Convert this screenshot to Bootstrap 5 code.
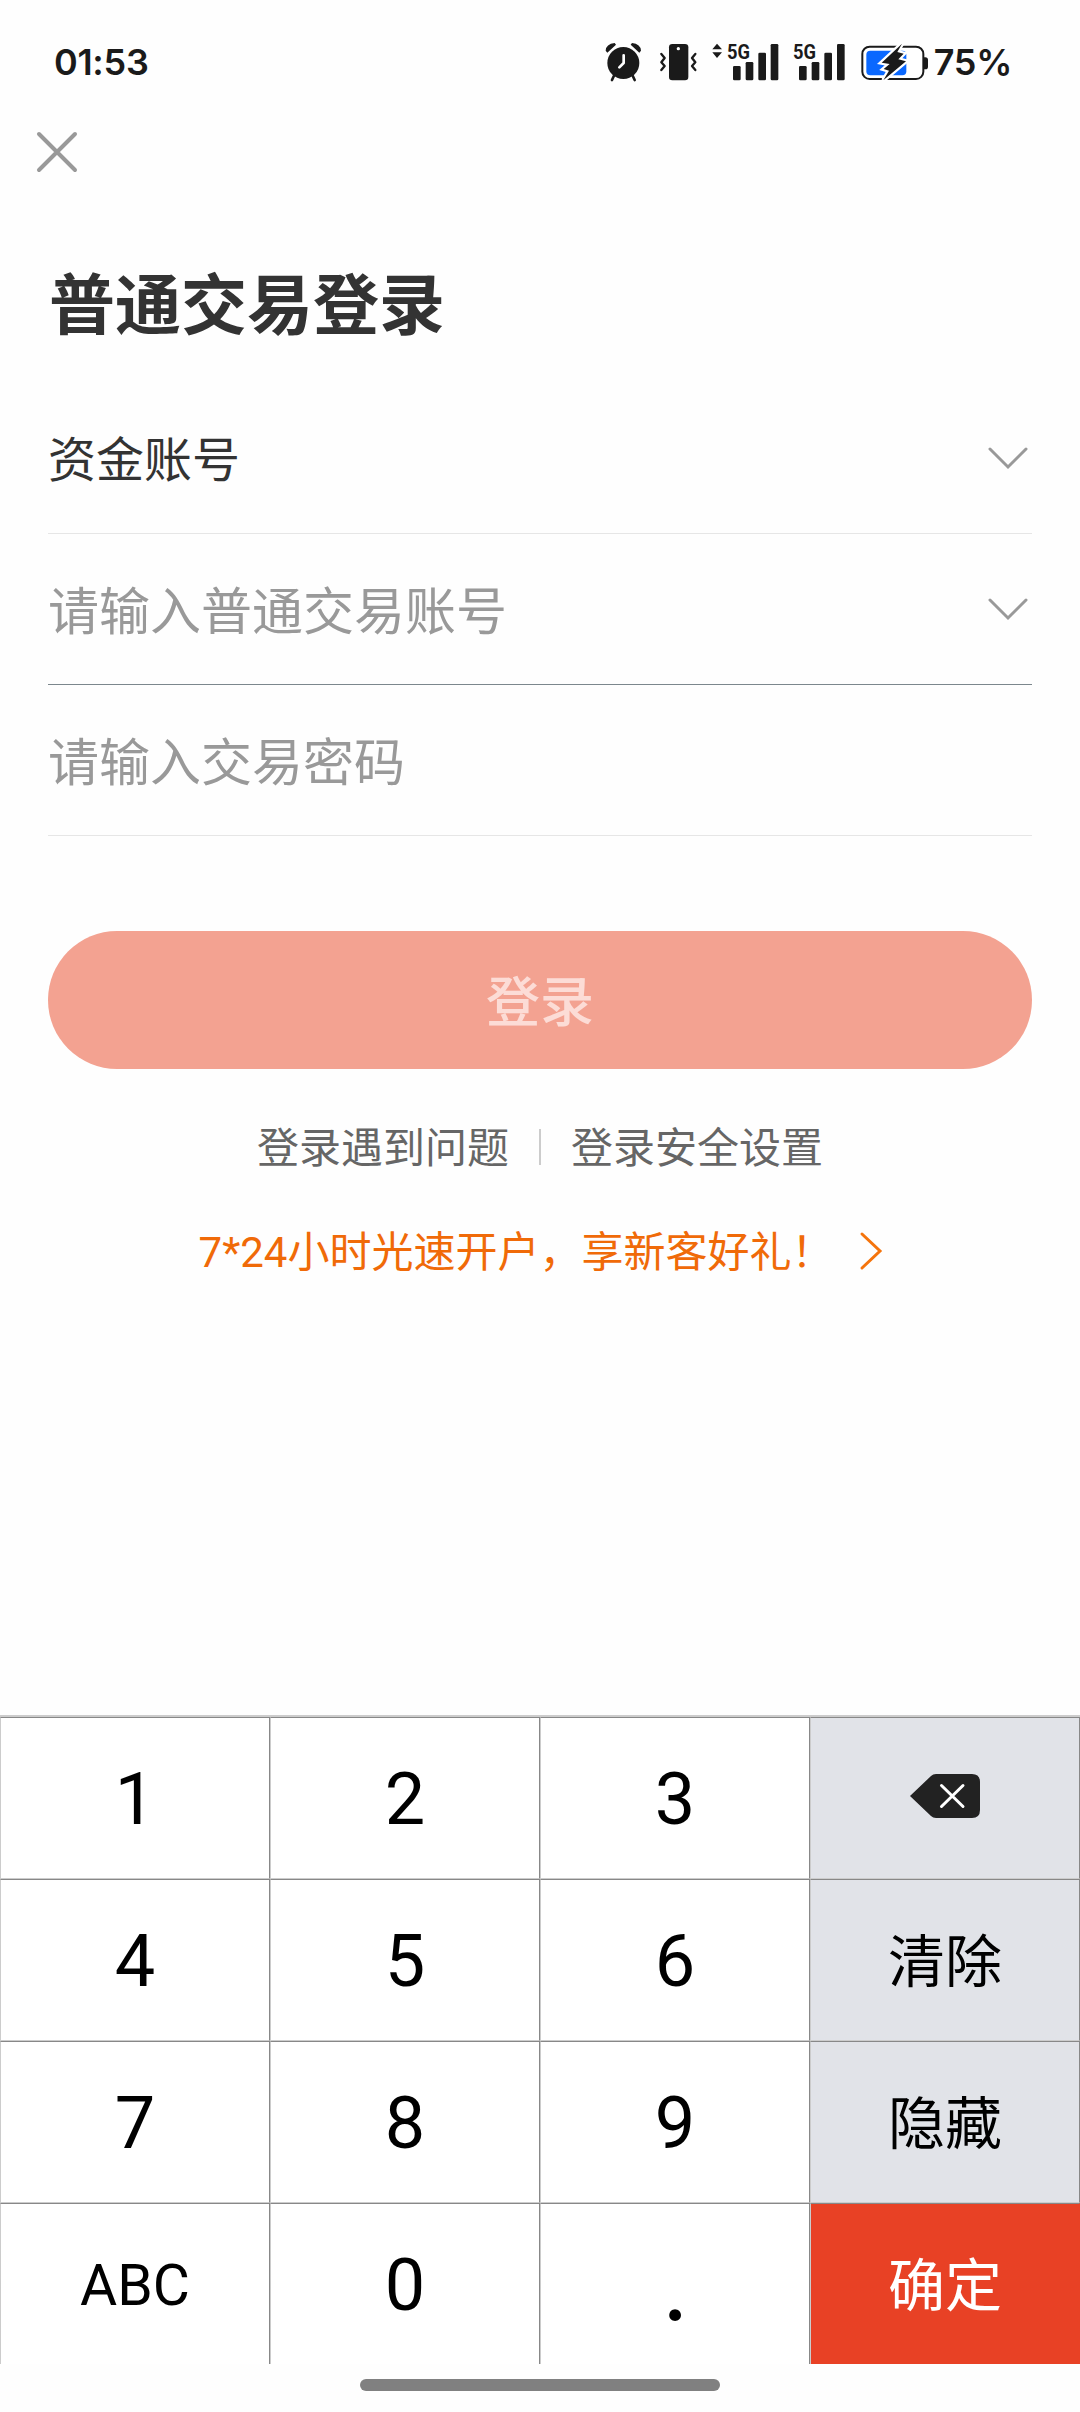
<!DOCTYPE html>
<html lang="zh-CN">
<head>
  <meta charset="UTF-8">
  <meta name="viewport" content="width=device-width, initial-scale=1">
  <title>普通交易登录</title>
  <link href="https://cdn.jsdelivr.net/npm/bootstrap@5.3.0/dist/css/bootstrap.min.css" rel="stylesheet">
  <style>
    body { font-family: Roboto, "Noto Sans CJK SC", sans-serif; background: #fefefe; color: #333; line-height: 1.2; }
    svg { display: block; flex: none; overflow: visible; }
    .screen { width: 1080px; height: 2412px; overflow: hidden; }

    /* status bar */
    .status-bar { height: 124px; padding: 42px 68px 0 54px; color: #1a1a1a; font: 600 36px/40px Inter, sans-serif; letter-spacing: -.3px; }
    .icon-vibrate { margin-left: 18px; }
    .icon-signal { margin-left: 15px; }
    .icon-signal-2 { margin-left: 14px; }
    .icon-battery { margin-left: 16px; }
    .percent { margin-left: 5px; }

    .btn-exit { margin: 7px 0 0 36px; width: 42px; height: 42px; }
    .login-form { padding: 0 48px; }
    .page-title { margin: 89px 0 0 1px; font-size: 66px; line-height: 90px; }

    .field { height: 151px; border-bottom: 1px solid #e6e6e6; font-size: 51px; color: #999; padding-right: 4px; }
    .field span { padding-top: 8px; }
    .field-type { height: 182px; font-size: 48px; color: #333; padding-top: 31px; }
    .field-type span { padding-top: 6px; }
    .field-active { border-bottom-color: #7c878d; }

    .btn-login { margin-top: 95px; height: 138px; padding-top: 9px; border-radius: 69px; background: #f3a291; color: #fcdcd6; font-size: 54px; font-weight: 500; }
    .help-links { margin-top: 47px; height: 62px; font-size: 42px; color: #666; gap: 30px; }
    .help-links a, .promo a { padding-top: 4px; }
    .help-divider { width: 2px; height: 36px; background: #ccc; }
    .promo { margin-top: 42px; height: 62px; padding-left: 2px; font-size: 42px; color: #f06a08; gap: 26px; }

    /* numeric keyboard */
    .keyboard { border-top: 2px solid #ccc; display: grid; grid-template-columns: repeat(4, 270px); grid-template-rows: repeat(3, 162px) 161px; }
    .key { border: 1px solid; border-color: #888 #888 #ccc #ccc; background: #fff; color: #000; font-size: 72px; padding: 4px 0 0; }
    .key-last { border-bottom: 0; }
    .key-fn { background: #e1e3e8; font-size: 57px; padding-top: 7px; }
    .key-del { padding: 0 0 4px; }
    .key-abc { font-size: 57px; }
    .key-dot { font-family: Lato, sans-serif; font-size: 94px; padding: 0; }
    .key-ok { background: #e84125; color: #fff; font-size: 57px; border-right-color: #e84125; padding-top: 7px; }
    .home-bar { width: 360px; height: 12px; margin: 15px auto 21px; background: #808080; }
  </style>
</head>
<body>
  <div class="screen d-flex flex-column">

    <!-- Status bar -->
    <div class="status-bar d-flex justify-content-between align-items-start">
      <span>01:53</span>
      <div class="d-flex">
        <svg width="37" height="40" viewBox="45 36 111 120" fill="#1a1a1a">
          <circle cx="100" cy="99" r="48"/>
          <path d="M47 62Q48 42 74 39L78 44L52 68ZM153 62Q152 42 126 39L122 44L148 68Z"/>
          <path d="M73 135L66 150M127 135L134 150" stroke="#1a1a1a" stroke-width="8" stroke-linecap="round"/>
          <path d="M101 76V99L88 112" fill="none" stroke="#fff" stroke-width="8" stroke-linecap="round" stroke-linejoin="round"/>
        </svg>
        <svg class="icon-vibrate" width="37" height="40" viewBox="209 36 111 120">
          <rect x="236" y="42" width="58" height="109" rx="10" fill="#1a1a1a"/>
          <circle cx="264" cy="56" r="5" fill="#fff"/>
          <path d="M213 72L223 84L213 97L223 108L213 120M315 72L305 84L315 97L305 108L315 120" fill="none" stroke="#1a1a1a" stroke-width="7" stroke-linecap="round" stroke-linejoin="round"/>
        </svg>
        <svg class="icon-signal" width="67" height="40" viewBox="366 36 201 120" fill="#1a1a1a">
          <path d="M367 58L381 41L396 58ZM367 67L381 84L396 67Z"/>
          <text x="411" y="86" font-family="Roboto" font-weight="700" font-size="63" letter-spacing="0" textLength="69" lengthAdjust="spacingAndGlyphs">5G</text>
          <rect x="429" y="108" width="23" height="43" rx="4"/>
          <rect x="467" y="96" width="23" height="55" rx="4"/>
          <rect x="505" y="68" width="23" height="83" rx="4"/>
          <rect x="542" y="42" width="23" height="109" rx="4"/>
        </svg>
        <svg class="icon-signal-2" width="52" height="40" viewBox="609 36 156 120" fill="#1a1a1a">
          <text x="609" y="86" font-family="Roboto" font-weight="700" font-size="63" letter-spacing="0" textLength="69" lengthAdjust="spacingAndGlyphs">5G</text>
          <rect x="627" y="108" width="23" height="43" rx="4"/>
          <rect x="665" y="96" width="23" height="55" rx="4"/>
          <rect x="703" y="68" width="23" height="83" rx="4"/>
          <rect x="741" y="42" width="23" height="109" rx="4"/>
        </svg>
        <svg class="icon-battery" width="68" height="40" viewBox="122 36 204 120">
          <rect x="126" y="50" width="183" height="97" rx="22" fill="#fff" stroke="#1a1a1a" stroke-width="6"/>
          <path d="M311 82H315Q323 82 323 90V110Q323 118 315 118H311Z" fill="#1a1a1a"/>
          <rect x="138" y="62" width="120" height="74" rx="12" fill="#0a68ff"/>
          <path d="M245 41L184 98L208 102L190 117L206 122L189 151L257 94L234 88L250 71L231 66Z" fill="#1a1a1a" stroke="#fff" stroke-width="13" paint-order="stroke"/>
        </svg>
        <span class="percent">75%</span>
      </div>
    </div>

    <a class="btn-exit d-block" href="#" aria-label="关闭">
      <svg width="42" height="42" viewBox="0 0 42 42" stroke="#999" stroke-width="4" stroke-linecap="round">
        <path d="M3 3L39 39M39 3L3 39"/>
      </svg>
    </a>

    <!-- Login form -->
    <div class="login-form">
      <h1 class="page-title fw-bold">普通交易登录</h1>

      <div class="field field-type d-flex justify-content-between align-items-center">
        <span>资金账号</span>
        <svg width="40" height="24" viewBox="0 0 40 24" fill="none" stroke="#999" stroke-width="3" stroke-linecap="round">
          <path d="M2 3L20 21L38 3"/>
        </svg>
      </div>
      <div class="field field-active d-flex justify-content-between align-items-center">
        <span>请输入普通交易账号</span>
        <svg width="40" height="24" viewBox="0 0 40 24" fill="none" stroke="#999" stroke-width="3" stroke-linecap="round">
          <path d="M2 3L20 21L38 3"/>
        </svg>
      </div>
      <div class="field d-flex align-items-center">
        <span>请输入交易密码</span>
      </div>

      <button type="button" class="btn-login border-0 w-100 d-block">登录</button>

      <div class="help-links d-flex justify-content-center align-items-center">
        <a class="text-reset text-decoration-none" href="#">登录遇到问题</a>
        <span class="help-divider"></span>
        <a class="text-reset text-decoration-none" href="#">登录安全设置</a>
      </div>
      <div class="promo d-flex justify-content-center align-items-center">
        <a class="text-reset text-decoration-none" href="#">7*24小时光速开户，享新客好礼！</a>
        <svg width="24" height="40" viewBox="0 0 24 40" fill="none" stroke="#f5740c" stroke-width="3" stroke-linecap="round">
          <path d="M3 3L21 20L3 37"/>
        </svg>
      </div>
    </div>

    <!-- Keyboard -->
    <div class="keyboard mt-auto">
      <button class="key">1</button>
      <button class="key">2</button>
      <button class="key">3</button>
      <button class="key key-fn key-del d-flex justify-content-center align-items-center" aria-label="删除">
        <svg width="70" height="44" viewBox="0 0 70 44">
          <path d="M0 22L21 2Q23 0 26 0H62Q70 0 70 8V36Q70 44 62 44H26Q23 44 21 42Z" fill="#222"/>
          <path d="M31.500 11.500L53 32.500M53 11.500L31.500 32.500" stroke="#fff" stroke-width="3" stroke-linecap="round"/>
        </svg>
      </button>
      <button class="key">4</button>
      <button class="key">5</button>
      <button class="key">6</button>
      <button class="key key-fn">清除</button>
      <button class="key">7</button>
      <button class="key">8</button>
      <button class="key">9</button>
      <button class="key key-fn">隐藏</button>
      <button class="key key-last key-abc">ABC</button>
      <button class="key key-last">0</button>
      <button class="key key-last key-dot">.</button>
      <button class="key key-last key-ok">确定</button>
    </div>
    <div class="home-bar rounded-pill flex-shrink-0"></div>
  </div>

  <script src="https://cdn.jsdelivr.net/npm/bootstrap@5.3.0/dist/js/bootstrap.bundle.min.js"></script>
</body>
</html>
